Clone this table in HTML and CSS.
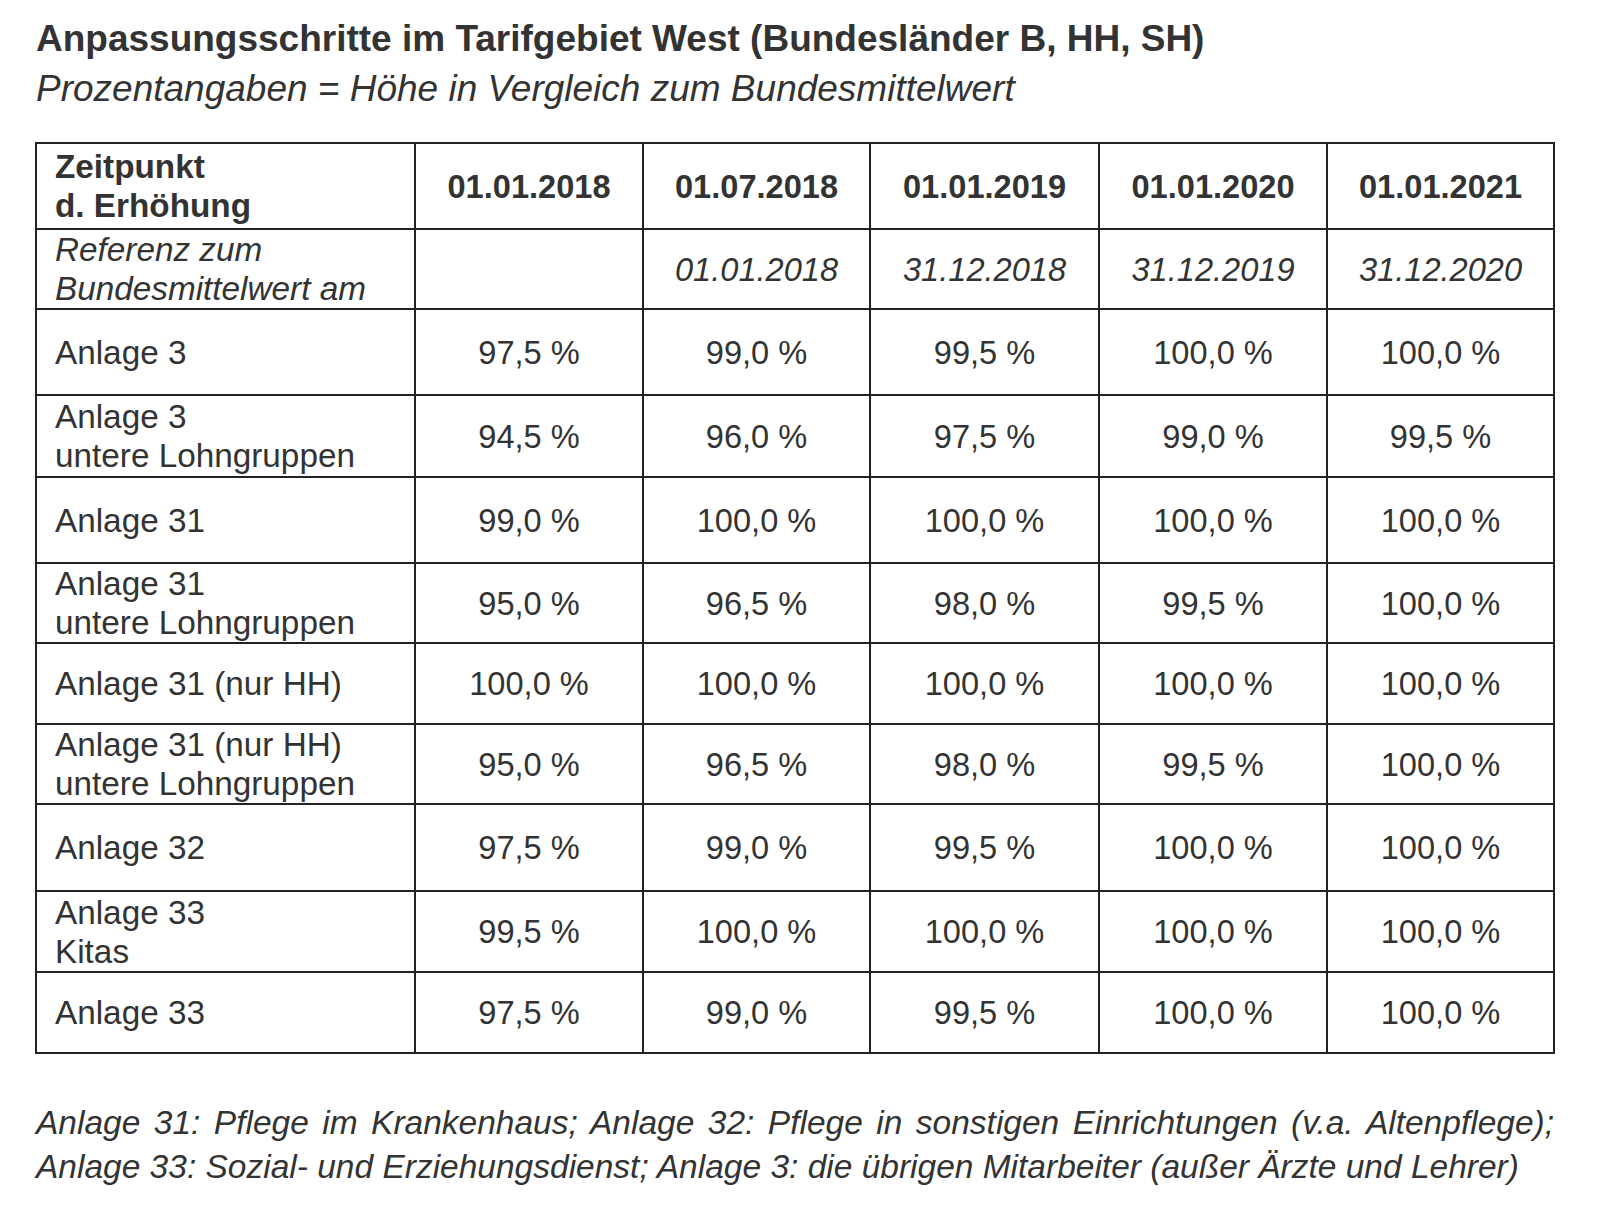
FILE: index.html
```html
<!DOCTYPE html>
<html lang="de">
<head>
<meta charset="utf-8">
<title>Anpassungsschritte im Tarifgebiet West</title>
<link rel="stylesheet" href="styles.css">
</head>
<body>
<main class="page">
  <header class="heading">
    <h1 class="title">Anpassungsschritte im Tarifgebiet West (Bundesländer B, HH, SH)</h1>
    <p class="subtitle">Prozentangaben = Höhe in Vergleich zum Bundesmittelwert</p>
  </header>

  <table class="grid">
    <colgroup>
      <col class="c-label">
      <col class="c-a">
      <col class="c-b">
      <col class="c-c">
      <col class="c-d">
      <col class="c-e">
    </colgroup>
    <thead>
      <tr class="row-head">
        <th class="label">Zeitpunkt<br>d. Erhöhung</th>
        <th>01.01.2018</th>
        <th>01.07.2018</th>
        <th>01.01.2019</th>
        <th>01.01.2020</th>
        <th>01.01.2021</th>
      </tr>
    </thead>
    <tbody>
      <tr class="row-ref">
        <td class="label">Referenz zum<br>Bundesmittelwert am</td>
        <td></td>
        <td>01.01.2018</td>
        <td>31.12.2018</td>
        <td>31.12.2019</td>
        <td>31.12.2020</td>
      </tr>
      <tr>
        <td class="label">Anlage 3</td>
        <td>97,5 %</td><td>99,0 %</td><td>99,5 %</td><td>100,0 %</td><td>100,0 %</td>
      </tr>
      <tr>
        <td class="label">Anlage 3<br>untere Lohngruppen</td>
        <td>94,5 %</td><td>96,0 %</td><td>97,5 %</td><td>99,0 %</td><td>99,5 %</td>
      </tr>
      <tr>
        <td class="label">Anlage 31</td>
        <td>99,0 %</td><td>100,0 %</td><td>100,0 %</td><td>100,0 %</td><td>100,0 %</td>
      </tr>
      <tr>
        <td class="label">Anlage 31<br>untere Lohngruppen</td>
        <td>95,0 %</td><td>96,5 %</td><td>98,0 %</td><td>99,5 %</td><td>100,0 %</td>
      </tr>
      <tr>
        <td class="label">Anlage 31 (nur HH)</td>
        <td>100,0 %</td><td>100,0 %</td><td>100,0 %</td><td>100,0 %</td><td>100,0 %</td>
      </tr>
      <tr>
        <td class="label">Anlage 31 (nur HH)<br>untere Lohngruppen</td>
        <td>95,0 %</td><td>96,5 %</td><td>98,0 %</td><td>99,5 %</td><td>100,0 %</td>
      </tr>
      <tr>
        <td class="label">Anlage 32</td>
        <td>97,5 %</td><td>99,0 %</td><td>99,5 %</td><td>100,0 %</td><td>100,0 %</td>
      </tr>
      <tr>
        <td class="label">Anlage 33<br>Kitas</td>
        <td>99,5 %</td><td>100,0 %</td><td>100,0 %</td><td>100,0 %</td><td>100,0 %</td>
      </tr>
      <tr>
        <td class="label">Anlage 33</td>
        <td>97,5 %</td><td>99,0 %</td><td>99,5 %</td><td>100,0 %</td><td>100,0 %</td>
      </tr>
    </tbody>
  </table>

  <p class="note">
    <span class="note-line note-first">Anlage 31: Pflege im Krankenhaus; Anlage 32: Pflege in sonstigen Einrichtungen (v.a. Altenpflege);</span>
    <span class="note-line">Anlage 33: Sozial- und Erziehungsdienst; Anlage 3: die übrigen Mitarbeiter (außer Ärzte und Lehrer)</span>
  </p>
</main>
</body>
</html>
```

FILE: styles.css
```css
html, body {
  margin: 0;
  padding: 0;
  background: #ffffff;
}

body {
  font-family: "Liberation Sans", Arial, sans-serif;
  color: #333333;
}

.page {
  padding: 15px 0 0 36px;
  width: 1518px;
}

.heading {
  margin: 0;
}

.title {
  margin: 0;
  font-size: 37px;
  line-height: 48px;
  font-weight: bold;
  color: #333333;
}

.subtitle {
  margin: 2px 0 0 0;
  font-size: 37px;
  line-height: 48px;
  font-style: italic;
  color: #333333;
}

.grid {
  margin: 29px 0 0 -1px;
  border-collapse: separate;
  border-spacing: 0;
  table-layout: fixed;
  width: 1520px;
  border-top: 2px solid #222222;
  border-left: 2px solid #222222;
  font-size: 32.6px;
  color: #333333;
}

.c-label { width: 379px; }
.c-a { width: 228px; }
.c-b { width: 227px; }
.c-c { width: 229px; }
.c-d { width: 228px; }
.c-e { width: 227px; }

.grid th,
.grid td {
  border-right: 2px solid #222222;
  border-bottom: 2px solid #222222;
  padding: 0;
  text-align: center;
  vertical-align: middle;
  line-height: 39px;
  font-weight: normal;
}

.grid th {
  font-weight: bold;
}

.grid .label {
  text-align: left;
  padding-left: 18px;
  font-size: 33.3px;
}

.row-ref td {
  font-style: italic;
}

.grid tr { height: 81px; }
.grid thead tr { height: 86px; }
.grid tbody tr:nth-child(1) { height: 80px; }
.grid tbody tr:nth-child(2) { height: 86px; }
.grid tbody tr:nth-child(3) { height: 82px; }
.grid tbody tr:nth-child(4) { height: 86px; }
.grid tbody tr:nth-child(5) { height: 80px; }
.grid tbody tr:nth-child(6) { height: 81px; }
.grid tbody tr:nth-child(7) { height: 80px; }
.grid tbody tr:nth-child(8) { height: 87px; }
.grid tbody tr:nth-child(9) { height: 81px; }
.grid tbody tr:nth-child(10) { height: 81px; }

.note {
  margin: 47px 0 0 0;
  font-size: 33.5px;
  line-height: 44px;
  font-style: italic;
  color: #333333;
}

.note-line {
  display: block;
}

.note-first {
  text-align: justify;
  text-align-last: justify;
}
```
